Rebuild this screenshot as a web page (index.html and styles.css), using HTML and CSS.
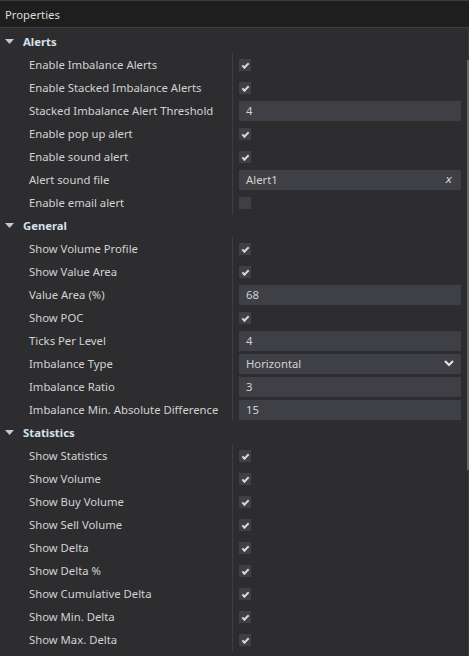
FILE: index.html
```html
<!DOCTYPE html>
<html>
<head>
<meta charset="utf-8">
<link rel="stylesheet" href="styles.css">
</head>
<body>
<div class="panel">
  <div class="titlebar">Properties</div>
  <div class="content">
    <div class="group">
      <div class="ghead"><svg class="tri" width="9" height="5" viewBox="0 0 9 5"><polygon points="0,0 9,0 4.5,5" fill="#c8c8c8"/></svg><span>Alerts</span></div>
      <div class="row"><div class="label">Enable Imbalance Alerts</div><div class="value"><span class="cb on"></span></div></div>
      <div class="row"><div class="label">Enable Stacked Imbalance Alerts</div><div class="value"><span class="cb on"></span></div></div>
      <div class="row"><div class="label">Stacked Imbalance Alert Threshold</div><div class="value"><div class="input">4</div></div></div>
      <div class="row"><div class="label">Enable pop up alert</div><div class="value"><span class="cb on"></span></div></div>
      <div class="row"><div class="label">Enable sound alert</div><div class="value"><span class="cb on"></span></div></div>
      <div class="row"><div class="label">Alert sound file</div><div class="value"><div class="input"><span class="grow">Alert1</span><span class="clear">x</span></div></div></div>
      <div class="row"><div class="label">Enable email alert</div><div class="value"><span class="cb"></span></div></div>
    </div>
    <div class="group">
      <div class="ghead"><svg class="tri" width="9" height="5" viewBox="0 0 9 5"><polygon points="0,0 9,0 4.5,5" fill="#c8c8c8"/></svg><span>General</span></div>
      <div class="row"><div class="label">Show Volume Profile</div><div class="value"><span class="cb on"></span></div></div>
      <div class="row"><div class="label">Show Value Area</div><div class="value"><span class="cb on"></span></div></div>
      <div class="row"><div class="label">Value Area (%)</div><div class="value"><div class="input">68</div></div></div>
      <div class="row"><div class="label">Show POC</div><div class="value"><span class="cb on"></span></div></div>
      <div class="row"><div class="label">Ticks Per Level</div><div class="value"><div class="input">4</div></div></div>
      <div class="row"><div class="label">Imbalance Type</div><div class="value"><div class="input"><span class="grow">Horizontal</span><svg class="chev" width="10" height="7" viewBox="0 0 10 7"><polyline points="1,1 5,5 9,1" fill="none" stroke="#e6e6e6" stroke-width="2"/></svg></div></div></div>
      <div class="row"><div class="label">Imbalance Ratio</div><div class="value"><div class="input">3</div></div></div>
      <div class="row"><div class="label">Imbalance Min. Absolute Difference</div><div class="value"><div class="input">15</div></div></div>
    </div>
    <div class="group">
      <div class="ghead"><svg class="tri" width="9" height="5" viewBox="0 0 9 5"><polygon points="0,0 9,0 4.5,5" fill="#c8c8c8"/></svg><span>Statistics</span></div>
      <div class="row"><div class="label">Show Statistics</div><div class="value"><span class="cb on"></span></div></div>
      <div class="row"><div class="label">Show Volume</div><div class="value"><span class="cb on"></span></div></div>
      <div class="row"><div class="label">Show Buy Volume</div><div class="value"><span class="cb on"></span></div></div>
      <div class="row"><div class="label">Show Sell Volume</div><div class="value"><span class="cb on"></span></div></div>
      <div class="row"><div class="label">Show Delta</div><div class="value"><span class="cb on"></span></div></div>
      <div class="row"><div class="label">Show Delta %</div><div class="value"><span class="cb on"></span></div></div>
      <div class="row"><div class="label">Show Cumulative Delta</div><div class="value"><span class="cb on"></span></div></div>
      <div class="row"><div class="label">Show Min. Delta</div><div class="value"><span class="cb on"></span></div></div>
      <div class="row"><div class="label">Show Max. Delta</div><div class="value"><span class="cb on"></span></div></div>
    </div>
    <div class="scrollthumb"></div>
  </div>
</div>
</body>
</html>
```
FILE: styles.css
```css
html, body {
  margin: 0;
  padding: 0;
  background: #2d2d30;
}
body {
  font-family: "Noto Sans", "Open Sans", sans-serif;
  font-size: 11.3px;
  color: #d4d4d4;
}
.panel {
  width: 469px;
  height: 656px;
  overflow: hidden;
  display: flex;
  flex-direction: column;
}
.titlebar {
  height: 26px;
  background: #1e1e1e;
  border-top: 1px solid #3c3c3c;
  border-bottom: 1px solid #3f3f41;
  display: flex;
  align-items: center;
  padding-left: 5px;
  color: #dcdcdc;
  flex: none;
}
.content {
  position: relative;
  flex: 1;
  padding-top: 2px;
  border-right: 1px solid #3a3a3c;
}
.scrollthumb {
  position: absolute;
  right: -1px;
  top: 32px;
  width: 2px;
  height: 410px;
  background: #686868;
}
.ghead {
  height: 23px;
  display: flex;
  align-items: center;
  font-weight: bold;
  color: #d6e0ea;
}
.tri {
  margin-left: 5px;
  margin-right: 9px;
}
.row {
  height: 23px;
  display: flex;
}
.label {
  width: 232px;
  box-sizing: border-box;
  padding-left: 29px;
  display: flex;
  align-items: center;
  white-space: nowrap;
  color: #d2d2d2;
}
.value {
  flex: 1;
  border-left: 1px solid #3f3f41;
  padding-left: 6px;
  padding-right: 7px;
  display: flex;
  align-items: center;
}
.cb {
  width: 12px;
  height: 12px;
  background: #3f3f46;
  display: inline-block;
  position: relative;
}
.cb.on::after {
  content: "";
  position: absolute;
  left: 3px;
  top: 4px;
  width: 5px;
  height: 2px;
  border-left: 2px solid #d8d8d8;
  border-bottom: 2px solid #d8d8d8;
  transform: rotate(-45deg);
}
.input {
  flex: 1;
  height: 20px;
  background: #3f3f46;
  display: flex;
  align-items: center;
  padding-left: 7px;
  padding-right: 8px;
  color: #d2d2d2;
}
.grow {
  flex: 1;
}
.clear {
  font-style: italic;
  font-family: "DejaVu Sans", sans-serif;
  font-size: 11px;
  color: #d8d8d8;
  margin-right: 1px;
}
.chev {
  margin-right: -1px;
}
```
